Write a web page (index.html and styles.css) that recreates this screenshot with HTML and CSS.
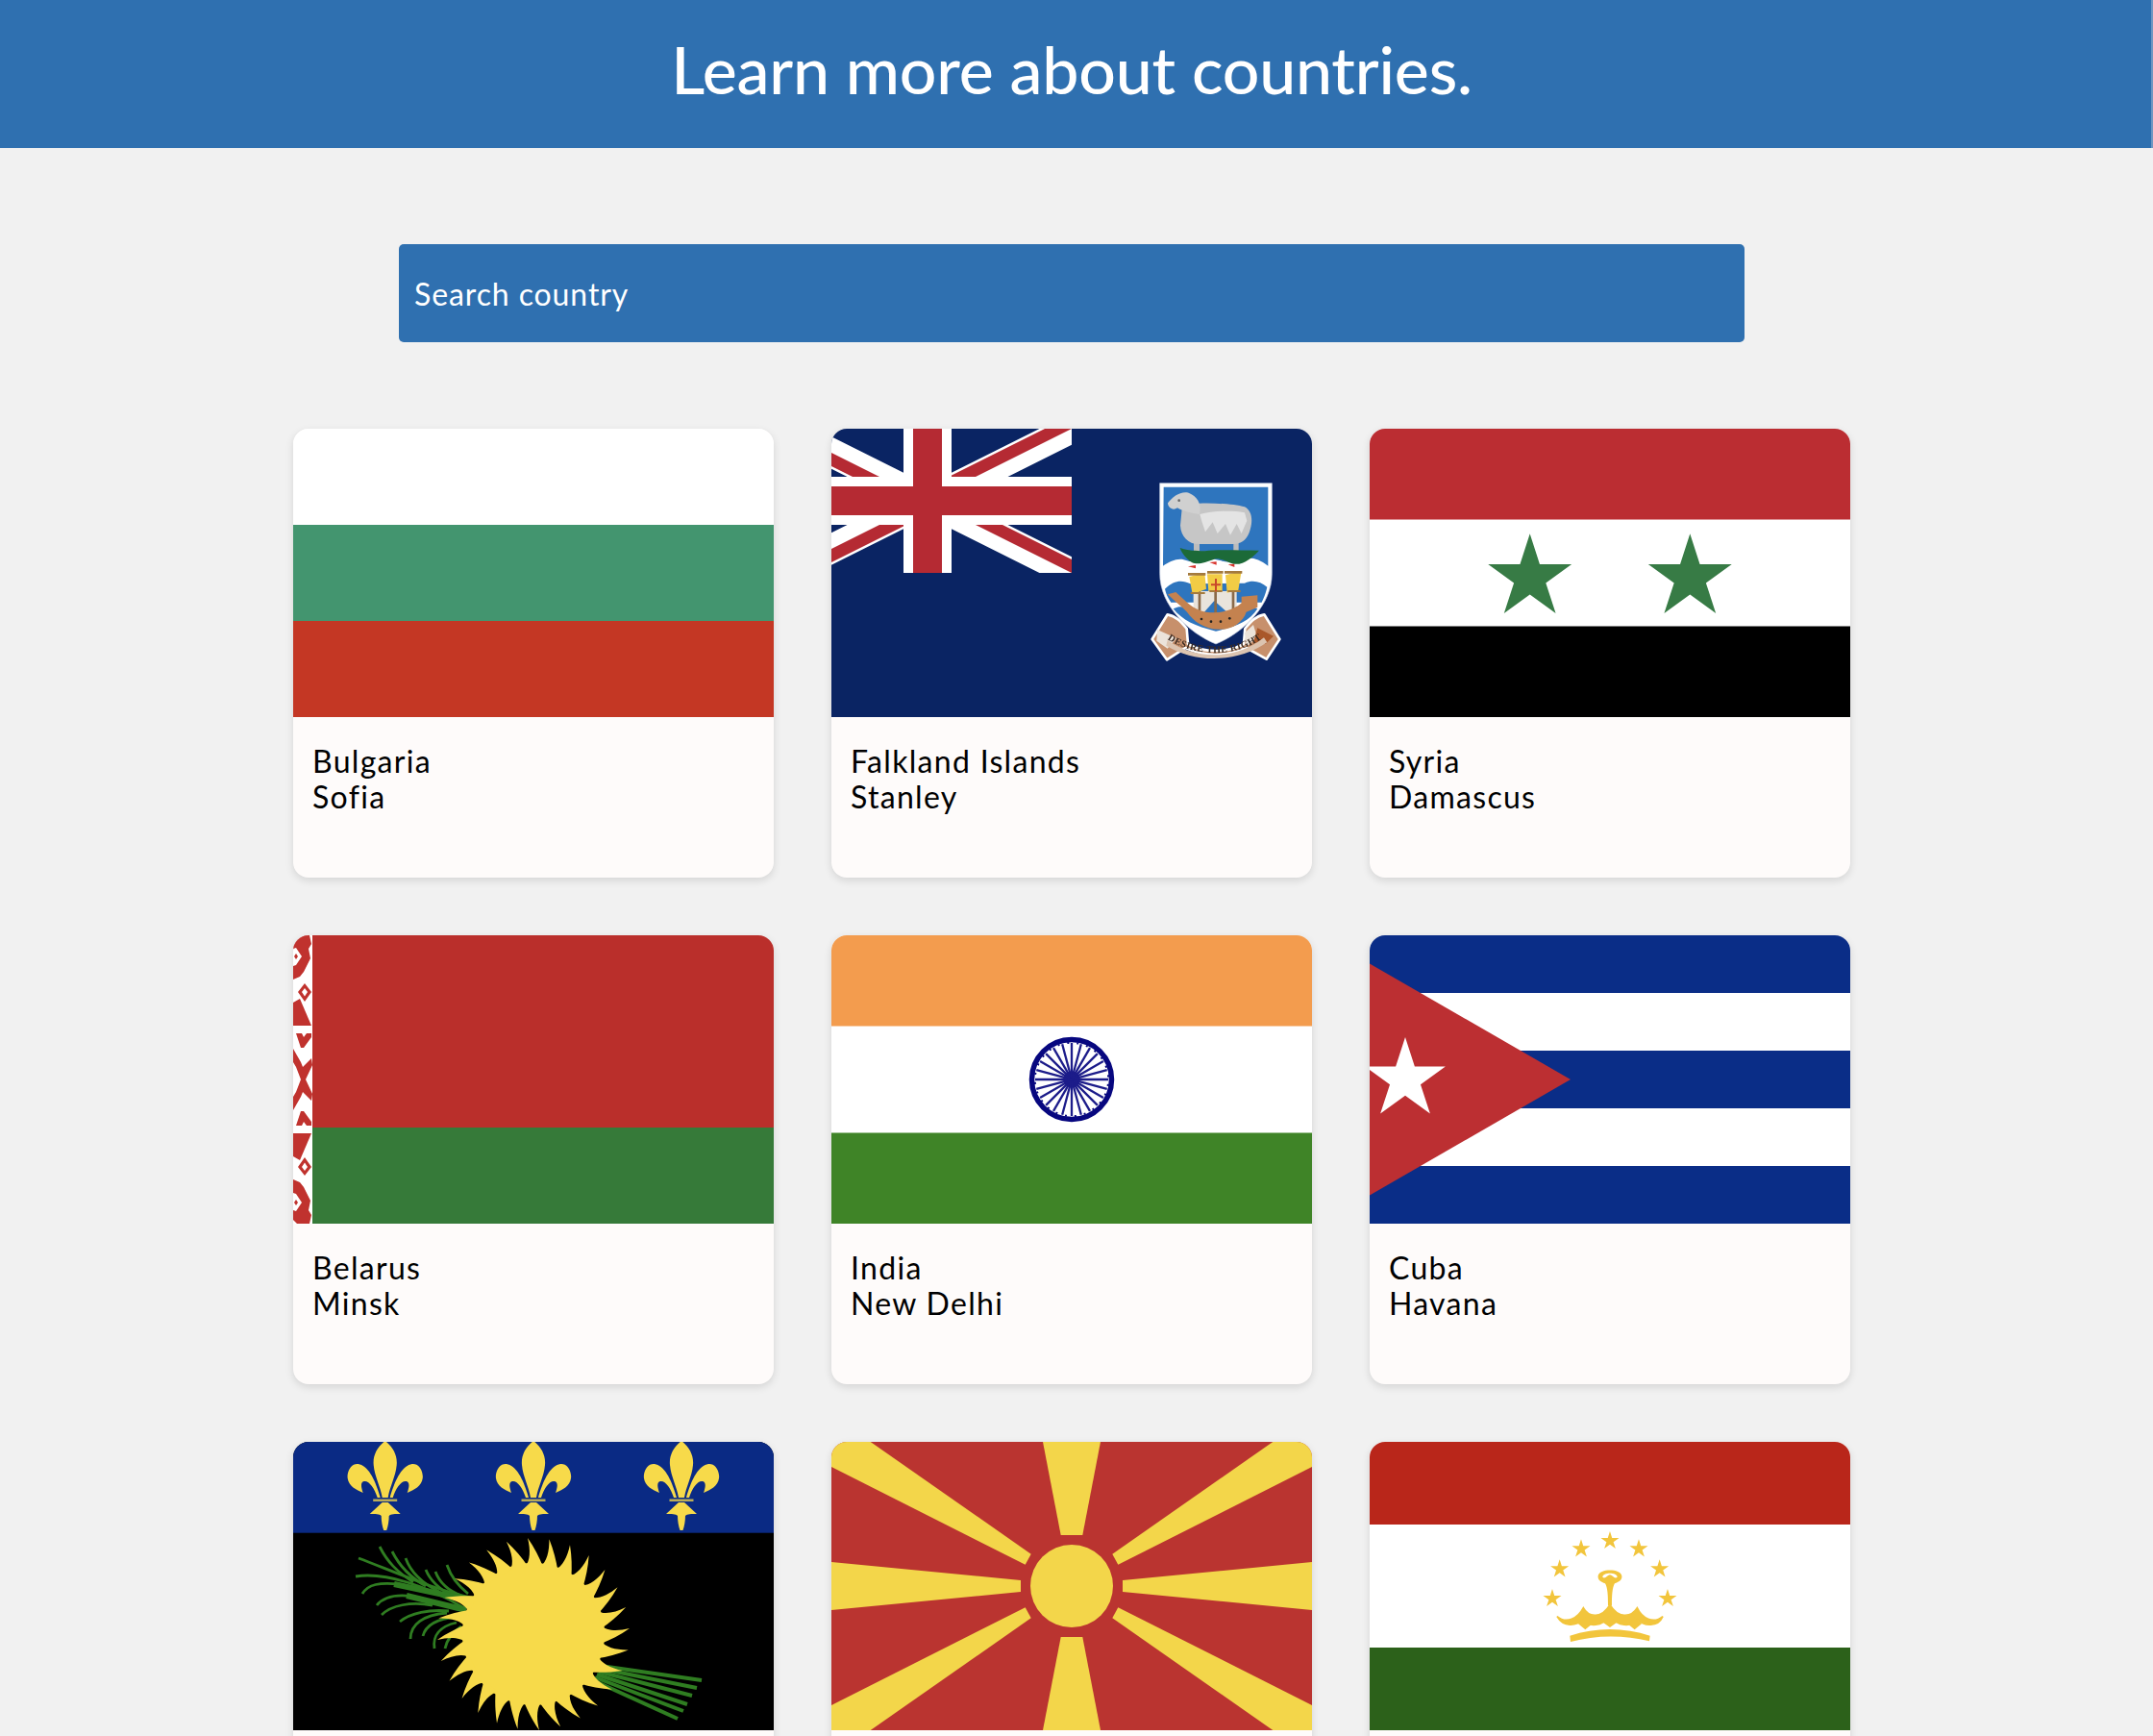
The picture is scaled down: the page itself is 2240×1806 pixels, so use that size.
FILE: index.html
```html
<!DOCTYPE html>
<html>
  <head>
    <title>
      Countries
    </title>
    <link rel="stylesheet" href="styles.css">
  </head>
  <body>
    <header class="top-bar">
      <h1>Learn more about countries.</h1>
    </header>

    <main class="content">
      <input class="search" type="text" placeholder="Search country">

      <div class="country-grid">

        <div class="card">
          <svg class="flag" viewBox="0 0 500 300">
            <defs>
              <filter id="soft" x="-5%" y="-5%" width="110%" height="110%"><feGaussianBlur stdDeviation="0.6"/></filter>
            </defs>
            <rect width="500" height="100" fill="#fff"/>
            <rect y="100" width="500" height="100" fill="#43956f"/>
            <rect y="200" width="500" height="100" fill="#c43724"/>
          </svg>
          <div class="card-text">
            <div>Bulgaria</div>
            <div>Sofia</div>
          </div>
        </div>

        <div class="card">
          <svg class="flag" viewBox="0 0 500 300">
            <rect width="500" height="300" fill="#0a2463"/>
            <clipPath id="canton"><rect width="250" height="150"/></clipPath>
            <clipPath id="counter"><path d="M30,15h30v15zv15h-30zh-30v-15zv-15h30z"/></clipPath>
            <g clip-path="url(#canton)">
              <g transform="translate(-50 0) scale(5)" fill="none">
                <path d="M0,0L60,30M60,0L0,30" stroke="#fff" stroke-width="6"/>
                <path d="M0,0L60,30M60,0L0,30" stroke="#b52a33" stroke-width="5" clip-path="url(#counter)"/>
                <path d="M30,0V30M0,15H60" stroke="#fff" stroke-width="10"/>
                <path d="M30,0V30M0,15H60" stroke="#b52a33" stroke-width="6"/>
              </g>
            </g>
            <!-- coat of arms -->
            <g transform="translate(315 44) scale(.3333)" filter="url(#soft)">
              <path d="M80,38H430V320C430,420 340,505 255,540C170,505 80,420 80,320Z" fill="#fff" stroke="#b9c6dc" stroke-width="2"/>
              <path d="M92,50H418V296C385,272 360,265 330,278C300,292 270,278 250,275C220,268 190,290 165,280C140,268 115,280 90,296Z" fill="#2e74be"/>
              <path d="M96,368C125,340 150,340 175,352L345,350C370,338 395,345 415,362C410,385 405,395 398,410L115,410C105,395 100,385 96,368Z" fill="#2e74be"/>
              <path d="M122,430C150,415 170,430 190,440L320,440C345,425 365,420 385,430C360,470 320,485 255,500C190,485 150,465 122,430Z" fill="#2e74be"/>
              <!-- sheep -->
              <path d="M186,215h18v42h-18zM310,215h16v34h-16z" fill="#bdbdbd"/>
              <path d="M150,108C190,95 300,100 345,112C370,125 372,160 358,195C348,218 330,230 300,228L200,228C170,228 146,205 144,170Z" fill="#c6c6c6"/>
              <path d="M105,100C120,80 145,62 170,68C195,78 212,100 204,135C180,132 150,125 135,115C122,125 105,115 105,100Z" fill="#d0d0d0"/>
              <path d="M205,135C240,125 300,122 345,130L352,155L335,195L320,165L300,200L285,165L260,195L245,160L222,190L212,160Z" fill="#e4e4e4"/>
              <circle cx="140" cy="92" r="4" fill="#666"/>
              <!-- ground -->
              <path d="M143,240C170,250 190,248 220,250C260,245 320,248 390,248C370,270 340,295 310,290C290,285 270,270 250,275C220,285 200,295 180,285C165,275 150,260 143,240Z" fill="#1f6b38"/>
              <!-- ship -->
              <path d="M185,375H320V445H185Z" fill="#e9e4dc"/>
              <path d="M215,445L250,405L295,445Z" fill="#2e74be"/>
              <path d="M200,375h8v60h-8zM250,340h8v110h-8zM305,375h8v60h-8z" fill="#8a6a48"/>
              <path d="M105,385L130,378L165,410C190,432 215,442 250,442C290,442 320,425 335,412L335,392L385,388L385,425L350,440C340,470 310,494 270,494C225,497 185,470 165,440C150,425 125,405 105,385Z" fill="#c4824f"/>
              <path d="M172,330L220,318L225,368L182,385ZM228,322H275V375H232ZM285,325L335,312L325,372L290,380Z" fill="#f2cc45"/>
              <path d="M168,318h55v8h-55zM228,312h50v8h-50zM282,312h55v8h-55zM176,378h45v6h-45zM235,372h40v6h-40zM292,372h40v6h-40z" fill="#a47a3c"/>
              <path d="M168,298l24,-4v10zM235,285l22,-2v10zM293,292l20,-2v10z" fill="#d8322c"/>
              <path d="M252,336l6,0l0,40l-6,0zM240,352h30v6h-30z" fill="#c9482a"/>
              <circle cx="210" cy="462" r="4" fill="#222"/><circle cx="240" cy="470" r="4" fill="#222"/><circle cx="270" cy="470" r="4" fill="#222"/><circle cx="298" cy="460" r="4" fill="#222"/>
              <!-- scroll -->
              <path d="M56,525L104,448C130,452 146,470 164,492L168,540C215,568 295,568 342,540L346,492C364,470 380,452 406,448L454,525L413,587L350,552C290,580 220,580 160,552L102,589Z" fill="#c7906c" stroke="#fff" stroke-width="8" stroke-linejoin="round"/>
              <path d="M72,495L132,522L104,554L70,530ZM345,505L372,480L384,520L350,548Z" fill="#ece3da"/>
              <path d="M385,490L435,515L410,540L372,535Z" fill="#a9582a"/>
              <path d="M104,528C190,590 320,590 405,520L415,535C320,600 190,600 100,545Z" fill="#dcc4b0"/>
              <path id="motto-line" d="M104,525C190,582 325,585 408,515" fill="none"/>
              <text class="motto"><textPath href="#motto-line">DESIRE THE RIGHT</textPath></text>
            </g>
          </svg>
          <div class="card-text">
            <div>Falkland Islands</div>
            <div>Stanley</div>
          </div>
        </div>

        <div class="card">
          <svg class="flag" viewBox="0 0 500 300">
            <defs>
              <polygon id="star" points="0,-1 .2245,-.309 .951,-.309 .363,.118 .588,.809 0,.382 -.588,.809 -.363,.118 -.951,-.309 -.2245,-.309"/>
            </defs>
            <rect width="500" height="300" fill="#fff"/>
            <rect width="500" height="94.5" fill="#bb2d32"/>
            <rect y="205.5" width="500" height="94.5" fill="#000"/>
            <use href="#star" transform="translate(166.7 155) scale(45.7)" fill="#377b45"/>
            <use href="#star" transform="translate(333.3 155) scale(45.7)" fill="#377b45"/>
          </svg>
          <div class="card-text">
            <div>Syria</div>
            <div>Damascus</div>
          </div>
        </div>

        <div class="card">
          <svg class="flag" viewBox="0 0 500 300">
            <rect width="500" height="200" fill="#ba2f2b"/>
            <rect y="200" width="500" height="100" fill="#367a39"/>
            <rect width="20" height="300" fill="#fff"/>
            <g filter="url(#soft)">
              <g id="ornament" fill="#c0322d">
                <path d="M0,4L4,0H17L19,9L16,14L18,24L11,38L7,43L0,46V32L3,31L9,22L3,13L0,14Z"/>
                <path d="M1,22l2,-3l2,3l-2,3z"/>
                <path d="M12,50l7,9l-7,10l-7,-10zM12,55l-3,4l3,4.500l3,-4.500z"/>
                <path d="M0,70L7,66L19,94H0Z"/>
                <path d="M3,102H9L11,106L14,102H19L19,106L11,117H8Z"/>
                <path d="M0,118L8,132L10,137L19,128L20,135L13,150H8L3,137L0,132Z"/>
              </g>
              <use href="#ornament" transform="translate(0 300) scale(1 -1)"/>
            </g>
          </svg>
          <div class="card-text">
            <div>Belarus</div>
            <div>Minsk</div>
          </div>
        </div>

        <div class="card">
          <svg class="flag" viewBox="0 0 500 300">
            <rect width="500" height="300" fill="#fff"/>
            <rect width="500" height="94.5" fill="#f39c4e"/>
            <rect y="205.5" width="500" height="94.5" fill="#3f8427"/>
            <g transform="translate(250 150)">
              <circle r="41.500" fill="none" stroke="#07077f" stroke-width="5.500"/>
              <circle r="8.500" fill="#07077f"/>
              <g stroke="#1c1c8a" stroke-width="2.300">
                <line x1="-38" x2="38"/>
                <line x1="-38" x2="38" transform="rotate(15)"/>
                <line x1="-38" x2="38" transform="rotate(30)"/>
                <line x1="-38" x2="38" transform="rotate(45)"/>
                <line x1="-38" x2="38" transform="rotate(60)"/>
                <line x1="-38" x2="38" transform="rotate(75)"/>
                <line x1="-38" x2="38" transform="rotate(90)"/>
                <line x1="-38" x2="38" transform="rotate(105)"/>
                <line x1="-38" x2="38" transform="rotate(120)"/>
                <line x1="-38" x2="38" transform="rotate(135)"/>
                <line x1="-38" x2="38" transform="rotate(150)"/>
                <line x1="-38" x2="38" transform="rotate(165)"/>
              </g>
              <circle r="38.200" fill="none" stroke="#07077f" stroke-width="2" stroke-dasharray="2 8" transform="rotate(7.500)"/>
            </g>
          </svg>
          <div class="card-text">
            <div>India</div>
            <div>New Delhi</div>
          </div>
        </div>

        <div class="card">
          <svg class="flag" viewBox="0 0 500 300">
            <rect width="500" height="300" fill="#0a2d87"/>
            <rect y="60" width="500" height="60" fill="#fff"/>
            <rect y="180" width="500" height="60" fill="#fff"/>
            <polygon points="0,29.500 209,150 0,270.500" fill="#bc2f32"/>
            <use href="#star" transform="translate(37 150) scale(44)" fill="#fff"/>
          </svg>
          <div class="card-text">
            <div>Cuba</div>
            <div>Havana</div>
          </div>
        </div>

        <div class="card">
          <svg class="flag" viewBox="0 0 500 300">
            <rect width="500" height="300" fill="#000"/>
            <rect width="500" height="94.700" fill="#0a2a84"/>
            <g fill="#f7da4a">
              <g id="fleur" transform="translate(95.700 0)">
                <path d="M0,-1C-8,5 -13,14 -12,24C-11,36 -5,46 -3,58H3C5,46 11,36 12,24C13,14 8,5 0,-1Z"/>
                <path d="M-5,58C-9,44 -16,25 -28,23C-36,22 -40,32 -39,38C-38,46 -30,50 -23,53C-25,47 -26,42 -22,41C-17,40 -11,48 -8,58Z"/>
                <path d="M5,58C9,44 16,25 28,23C36,22 40,32 39,38C38,46 30,50 23,53C25,47 26,42 22,41C17,40 11,48 8,58Z"/>
                <path d="M-12.500,59.500h25v2.500h-25z" opacity=".75"/>
                <path d="M-3,63L-16,75C-10,75 -6,75 -4,77C-4,82 -3,88 -1.500,92H1.500C3,88 4,82 4,77C6,75 10,75 16,75L3,63Z"/>
              </g>
              <use href="#fleur" x="154.300"/>
              <use href="#fleur" x="308.300"/>
            </g>
            <g class="palm">
              <path d="M68,121C105,135 150,155 186,162"/>
              <path d="M65,140C95,135 140,150 178,173"/>
              <path d="M90,109C98,125 108,135 125,146"/>
              <path d="M103,114C110,128 120,140 138,150"/>
              <path d="M117,121C122,135 132,146 152,156"/>
              <path d="M138,133C142,143 150,152 165,160"/>
              <path d="M148,135C152,146 162,155 175,160"/>
              <path d="M160,128C164,140 172,150 182,158"/>
              <path d="M72,158C78,148 90,146 110,148"/>
              <path d="M87,170C95,160 112,158 132,162"/>
              <path d="M92,180C102,170 122,166 145,170"/>
              <path d="M111,187C122,178 142,174 162,176"/>
              <path d="M122,205C122,190 135,180 160,178"/>
              <path d="M135,202C138,190 150,184 170,182"/>
              <path d="M147,215C145,202 152,192 170,188"/>
              <path d="M158,215C160,205 166,198 175,192"/>
              <path class="palm-core" d="M105,148L185,165M118,160L180,175"/>
            </g>
            <g class="stalks">
              <path d="M320,233L425,248"/>
              <path d="M320,236L420,256"/>
              <path d="M318,239L415,264"/>
              <path d="M316,242L410,273"/>
              <path d="M314,245L406,280"/>
              <path d="M312,248L400,288"/>
            </g>
            <g transform="translate(250 200)" fill="#f7da4a">
              <circle r="74"/>
              <g id="rays">
                <path id="ray" d="M-9,-70C-3,-76 -3,-88 -6,-100C1,-90 6,-80 10,-70Z"/>
                <use href="#ray" transform="rotate(12.857)"/>
                <use href="#ray" transform="rotate(25.714)"/>
                <use href="#ray" transform="rotate(38.571)"/>
                <use href="#ray" transform="rotate(51.429)"/>
                <use href="#ray" transform="rotate(64.286)"/>
                <use href="#ray" transform="rotate(77.143)"/>
              </g>
              <use href="#rays" transform="rotate(90)"/>
              <use href="#rays" transform="rotate(180)"/>
              <use href="#rays" transform="rotate(270)"/>
            </g>
          </svg>
        </div>

        <div class="card">
          <svg class="flag" viewBox="0 0 500 300">
            <rect width="500" height="300" fill="#ba3430"/>
            <g fill="#f3d64a">
              <circle cx="250" cy="150" r="43"/>
              <polygon points="220,0 280,0 261.300,97 238.700,97"/>
              <polygon points="220,300 280,300 261.300,203 238.700,203"/>
              <polygon points="0,125 197,144 197,156 0,175"/>
              <polygon points="500,125 303,144 303,156 500,175"/>
              <polygon points="0,0 40.700,0 207.700,116.700 201.700,127.700 0,26"/>
              <polygon points="500,0 459.300,0 292.300,116.700 298.300,127.700 500,26"/>
              <polygon points="0,300 40.700,300 207.700,183.300 201.700,172.300 0,274"/>
              <polygon points="500,300 459.300,300 292.300,183.300 298.300,172.300 500,274"/>
            </g>
          </svg>
        </div>

        <div class="card">
          <svg class="flag" viewBox="0 0 500 300">
            <rect width="500" height="300" fill="#fff"/>
            <rect width="500" height="86" fill="#b9261a"/>
            <rect y="214" width="500" height="86" fill="#2c611a"/>
            <g transform="translate(135 70) scale(.3333)" fill="#f2c53c">
              <use href="#star" transform="translate(345 99) scale(30)"/>
              <use href="#star" transform="translate(255 124) scale(30)"/>
              <use href="#star" transform="translate(435 124) scale(30)"/>
              <use href="#star" transform="translate(188 187) scale(30)"/>
              <use href="#star" transform="translate(500 187) scale(30)"/>
              <use href="#star" transform="translate(165 279) scale(30)"/>
              <use href="#star" transform="translate(525 279) scale(30)"/>
              <path d="M339,300C339,270 338,245 330,232C318,228 306,222 308,208C312,185 378,185 382,208C384,222 372,228 360,232C352,245 351,270 351,300H339ZM322,212C330,220 338,205 345,205C352,205 360,220 368,212C368,196 322,196 322,212Z"/>
              <path d="M180,335C210,360 245,340 262,308C280,340 320,340 345,298C370,340 410,340 430,308C445,340 480,360 510,335C495,370 450,365 430,345C410,370 370,365 345,335C320,365 280,370 262,345C240,365 200,370 180,335Z" stroke="#f2c53c" stroke-width="5"/>
              <path d="M268,338l22,20l-22,18l-22,-18zM345,333l22,20l-22,16l-22,-16zM422,338l22,20l-22,18l-22,-18z"/>
              <path d="M220,395C300,368 390,368 470,395L468,412C390,392 300,392 222,414Z"/>
            </g>
          </svg>
        </div>

      </div>
    </main>
  </body>
</html>
```
FILE: styles.css
```css
html, body {
  height: 100%;
  overflow: hidden;
}

body {
  margin: 0;
  background-color: #f1f1f1;
  font-family: "Lato", "Open Sans", sans-serif;
  color: #000;
}

.top-bar {
  height: 154px;
  display: flex;
  align-items: center;
  justify-content: center;
  padding-right: 8px;
  background-color: #2f70b0;
  border-right: 2px solid #6f97c2;
}

.top-bar h1 {
  margin: 0 0 12px;
  font-size: 68px;
  font-weight: 500;
  letter-spacing: -0.2px;
  color: #fff;
}

.content {
  padding-right: 10px;
}

.search {
  display: block;
  box-sizing: border-box;
  width: 1400px;
  height: 102px;
  margin: 100px auto 90px;
  padding: 0 16px;
  border: none;
  border-radius: 5px;
  background-color: #2f70b0;
  font-family: inherit;
  font-size: 32px;
  letter-spacing: 0.9px;
  color: #fff;
}

.search::placeholder {
  color: #fff;
  opacity: 1;
}

.country-grid {
  display: grid;
  grid-template-columns: repeat(3, 500px);
  gap: 60px;
  justify-content: center;
}

.card {
  height: 467px;
  border-radius: 16px;
  overflow: hidden;
  background-color: #fefbfa;
  box-shadow: 0 3px 8px rgba(0, 0, 0, 0.12);
}

.flag {
  display: block;
  width: 500px;
  height: 300px;
}

.card-text {
  padding: 27px 20px;
  font-size: 32px;
  line-height: 37px;
  letter-spacing: 1.3px;
}

.palm path {
  fill: none;
  stroke: #2f7d21;
  stroke-width: 2.8;
}

.palm .palm-core {
  stroke-width: 6;
}

.stalks path {
  fill: none;
  stroke: #2f7d21;
  stroke-width: 4;
}

.motto {
  font-family: "Liberation Serif", serif;
  font-size: 30px;
  font-weight: 700;
  letter-spacing: 1.5px;
  fill: #3a2a20;
}
```
